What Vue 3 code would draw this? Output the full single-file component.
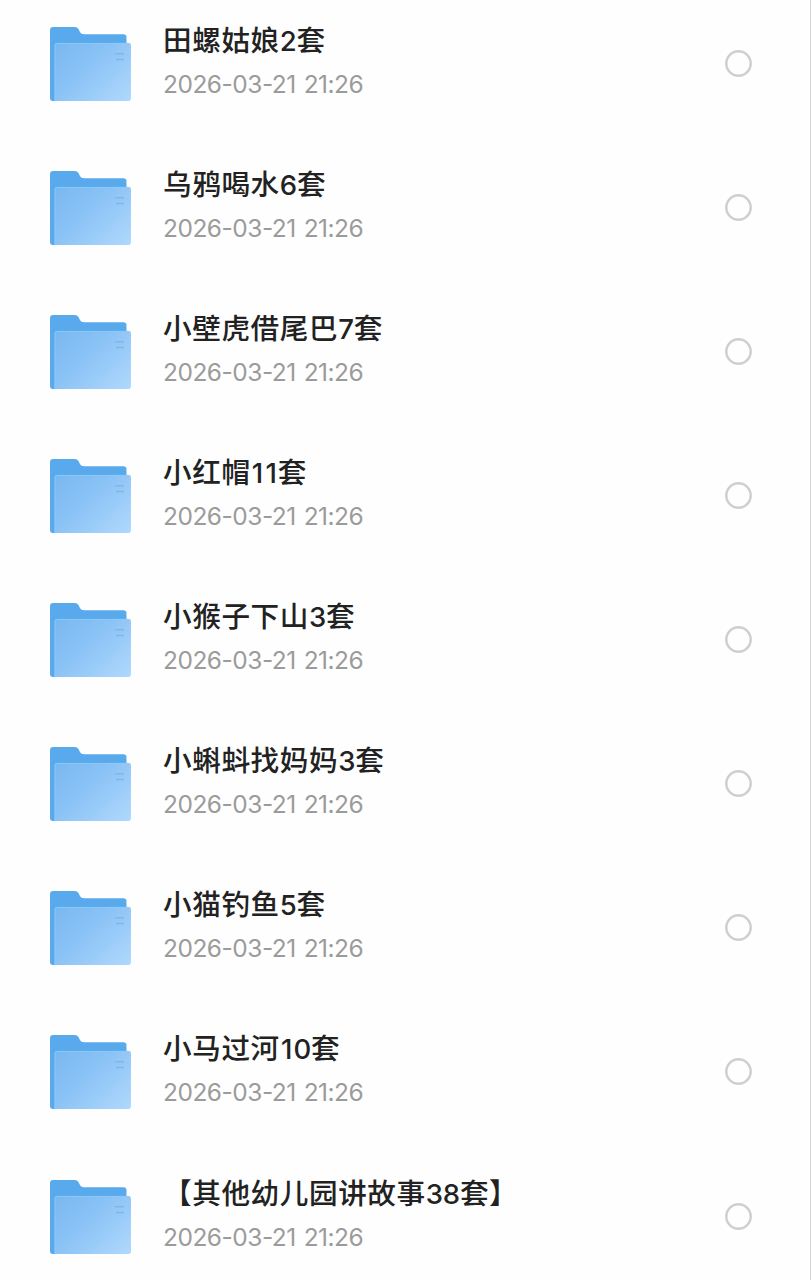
<template>
  <div class="file-list">
    <div v-for="folder in folders" :key="folder.name" class="file-row">
      <!-- Folder icon -->
      <svg class="folder-icon" viewBox="0 0 82 75">
        <defs>
          <linearGradient id="folderFront" x1="0" y1="0.1" x2="1" y2="0.9">
            <stop offset="0" stop-color="#79b9f1" />
            <stop offset="0.4" stop-color="#8ac2f5" />
            <stop offset="1" stop-color="#add7fd" />
          </linearGradient>
        </defs>
        <path
          d="M3 0H25Q27.5 0 28.6 2L30.3 5.3Q31.3 7.2 34 7.2H74Q77 7.2 77 10.2V74.5H2.5Q0 74.5 0 72V3Q0 0 3 0Z"
          fill="#58aaec"
        />
        <path
          d="M7 16H79Q81.5 16 81.5 18.5V72Q81.5 74.5 79 74.5H4.5V18.5Q4.5 16 7 16Z"
          fill="url(#folderFront)"
        />
        <path d="M5 74V18.5Q5 16.5 7 16.5H79" fill="none" stroke="#91c9f8" stroke-width="0.8" />
        <path d="M65.5 27H74.5M66.5 32.7H74.5" stroke="#7eb7eb" stroke-width="1.4" />
      </svg>

      <div class="file-info">
        <div class="file-name">
          <span
            v-for="(part, index) in splitName(folder.name)"
            :key="index"
            :class="{ digit: /\d/.test(part), one: part === '1' }"
          >{{ part }}</span>
        </div>
        <div class="file-date">{{ folder.date }}</div>
      </div>

      <button class="select-button" :aria-label="folder.name">
        <svg width="28" height="28" viewBox="0 0 28 28">
          <circle cx="13.5" cy="13.5" r="12.2" fill="none" stroke="#cfcfcf" stroke-width="2.5" />
        </svg>
      </button>
    </div>
  </div>
</template>

<script setup>
import { ref } from 'vue'

const folders = ref([
  { name: '田螺姑娘2套', date: '2026-03-21 21:26' },
  { name: '乌鸦喝水6套', date: '2026-03-21 21:26' },
  { name: '小壁虎借尾巴7套', date: '2026-03-21 21:26' },
  { name: '小红帽11套', date: '2026-03-21 21:26' },
  { name: '小猴子下山3套', date: '2026-03-21 21:26' },
  { name: '小蝌蚪找妈妈3套', date: '2026-03-21 21:26' },
  { name: '小猫钓鱼5套', date: '2026-03-21 21:26' },
  { name: '小马过河10套', date: '2026-03-21 21:26' },
  { name: '【其他幼儿园讲故事38套】', date: '2026-03-21 21:26' }
])

// Digits are set in a different face than the Chinese text
function splitName(name) {
  return name.split(/(\d)/).filter(part => part)
}
</script>

<style>
body {
  margin: 0;
  background-color: #fefefe;
}
</style>

<style scoped>
.file-list {
  box-sizing: border-box;
  height: 1280px;
  overflow: hidden;
  border-right: 1px solid #d4d4d4;
  background-color: #fefefe;
  font-family: Inter, 'Noto Sans CJK SC', sans-serif;
}

.file-row {
  display: flex;
  align-items: center;
  box-sizing: border-box;
  height: 144.125px;
  padding: 0 57.5px 0 49.5px;
}

.file-row:first-child {
  margin-top: -8.5px;
}

.folder-icon {
  flex: none;
  width: 81.5px;
  height: 74.5px;
  margin-top: 0.5px;
}

.file-info {
  flex: 1;
  margin-left: 32px;
  padding-bottom: 4px;
  white-space: nowrap;
}

.file-name {
  height: 44px;
  color: #222;
  font-family: 'Noto Sans CJK SC', sans-serif;
  font-size: 28.6px;
  font-weight: 500;
  letter-spacing: 0.6px;
  line-height: 41px;
}

.digit {
  font-family: Inter, sans-serif;
  font-size: 27.5px;
  letter-spacing: -0.2px;
}

.one {
  padding: 0 1.2px;
}

.file-date {
  color: #9b9b9b;
  font-size: 24.5px;
  letter-spacing: -0.5px;
  word-spacing: 1.5px;
  line-height: 44px;
}

.select-button {
  display: flex;
  padding: 0;
  border: none;
  background: none;
  cursor: pointer;
}
</style>
